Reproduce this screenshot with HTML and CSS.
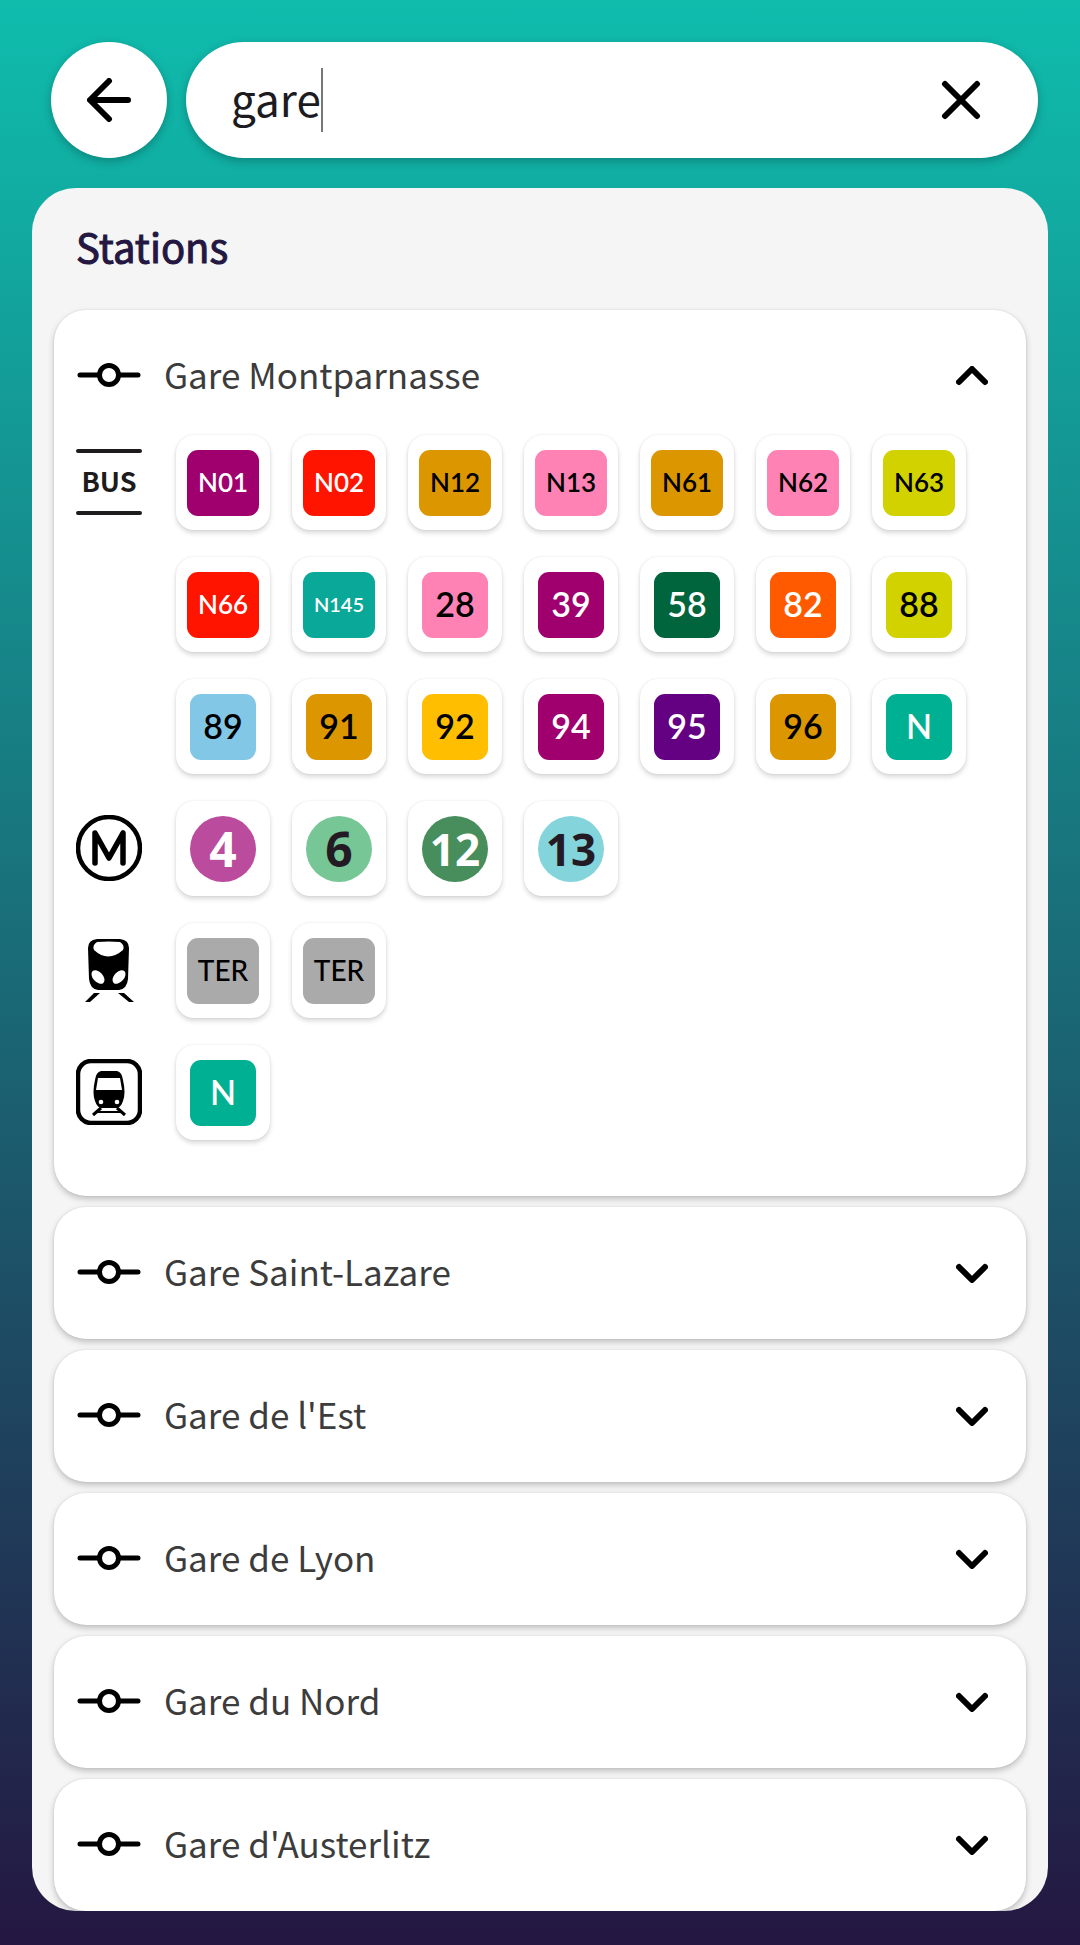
FILE: index.html
```html
<!DOCTYPE html>
<html lang="fr">
<head>
<meta charset="utf-8">
<meta name="viewport" content="width=device-width, initial-scale=1">
<title>Stations</title>
<link rel="stylesheet" href="styles.css">
</head>
<body>
<svg class="sprite" aria-hidden="true">
  <symbol id="stop" viewBox="0 0 66 26">
    <path d="M4 12h19M43 12h19" stroke="#000" stroke-width="5" stroke-linecap="round"/>
    <circle cx="33" cy="12" r="9.500" fill="none" stroke="#000" stroke-width="5"/>
  </symbol>
  <symbol id="chevron" viewBox="0 0 32 20">
    <path d="M3 4l13 13L29 4" fill="none" stroke="#000" stroke-width="6" stroke-linecap="round" stroke-linejoin="round"/>
  </symbol>
</svg>
<div class="app">
  <header class="bar">
    <button class="back" type="button" aria-label="Retour">
      <svg width="44" height="44" viewBox="0 0 44 44"><path d="M41 22H4M22 3L3 22l19 19" fill="none" stroke="#000" stroke-width="6" stroke-linecap="round" stroke-linejoin="round"/></svg>
    </button>
    <div class="search">
      <input class="query" type="text" value="gare" aria-label="Recherche"><span class="caret"></span>
      <button class="clear" type="button" aria-label="Effacer">
        <svg width="40" height="40" viewBox="0 0 40 40"><path d="M4 4l32 32M36 4L4 36" fill="none" stroke="#000" stroke-width="6" stroke-linecap="round"/></svg>
      </button>
    </div>
  </header>
  <main class="panel">
    <h1 class="title">Stations</h1>
    <section class="card">
      <button class="head" type="button" aria-expanded="true">
        <svg class="stop"><use href="#stop"/></svg><span class="name">Gare Montparnasse</span><svg class="chevron up"><use href="#chevron"/></svg>
      </button>
      <div class="modes">
        <div class="mode">
          <svg class="icon" viewBox="0 0 66 66" role="img" aria-label="Bus"><path d="M2 2h62M2 64h62" stroke="#1d1b1c" stroke-width="4" stroke-linecap="round"/><text class="bus" x="33" y="43" text-anchor="middle">BUS</text></svg>
          <div class="lines">
            <span class="tile"><b class="line wide plum">N01</b></span>
            <span class="tile"><b class="line wide red">N02</b></span>
            <span class="tile"><b class="line wide ochre">N12</b></span>
            <span class="tile"><b class="line wide pink">N13</b></span>
            <span class="tile"><b class="line wide ochre">N61</b></span>
            <span class="tile"><b class="line wide pink">N62</b></span>
            <span class="tile"><b class="line wide lime">N63</b></span>
            <span class="tile"><b class="line wide red">N66</b></span>
            <span class="tile"><b class="line wide small teal">N145</b></span>
            <span class="tile"><b class="line pink">28</b></span>
            <span class="tile"><b class="line plum">39</b></span>
            <span class="tile"><b class="line forest">58</b></span>
            <span class="tile"><b class="line orange">82</b></span>
            <span class="tile"><b class="line lime">88</b></span>
            <span class="tile"><b class="line sky">89</b></span>
            <span class="tile"><b class="line ochre">91</b></span>
            <span class="tile"><b class="line yellow">92</b></span>
            <span class="tile"><b class="line plum">94</b></span>
            <span class="tile"><b class="line violet">95</b></span>
            <span class="tile"><b class="line ochre">96</b></span>
            <span class="tile"><b class="line green">N</b></span>
          </div>
        </div>
        <div class="mode">
          <svg class="icon" viewBox="0 0 66 66" role="img" aria-label="Métro"><circle cx="33" cy="33" r="31" fill="none" stroke="#000" stroke-width="4.500"/><path d="M19 48V18l14 25 14-25v30" fill="none" stroke="#000" stroke-width="5.500" stroke-linecap="round" stroke-linejoin="round"/></svg>
          <div class="lines">
            <span class="tile"><b class="line round m4">4</b></span>
            <span class="tile"><b class="line round m6">6</b></span>
            <span class="tile"><b class="line round pair m12">12</b></span>
            <span class="tile"><b class="line round pair m13">13</b></span>
          </div>
        </div>
        <div class="mode">
          <svg class="icon" viewBox="0 0 66 66" role="img" aria-label="Train"><path fill-rule="evenodd" d="M21 2h23q9 1 9 9l-1 31q-1 10-9 11H22q-8-1-9-11L12 11q0-8 9-9zM21 5q-5 3-3 8 14 13 29 0 2-5-3-8-11-1-23 0z"/><ellipse cx="22" cy="40" rx="8" ry="5" transform="rotate(48 22 40)" fill="#fff"/><ellipse cx="43" cy="40" rx="8" ry="5" transform="rotate(-48 43 40)" fill="#fff"/><path d="M18 56h6L14 65H9zM42 56h6l10 9h-5z"/></svg>
          <div class="lines">
            <span class="tile"><b class="line wide ter">TER</b></span>
            <span class="tile"><b class="line wide ter">TER</b></span>
          </div>
        </div>
        <div class="mode">
          <svg class="icon" viewBox="0 0 66 66" role="img" aria-label="Transilien"><rect x="2" y="2" width="62" height="62" rx="13" fill="none" stroke="#000" stroke-width="4.500"/><path fill-rule="evenodd" d="M25 12h16q5 1 6 9 3 13 0 21-2 6-6 7H25q-4-1-6-7-3-8 0-21 1-8 6-9zM22 19l-2 12h26l-2-12z"/><circle cx="25" cy="43" r="2.300" fill="#fff"/><circle cx="41" cy="43" r="2.300" fill="#fff"/><path d="M25 49l-8 7M41 49l8 7" stroke="#000" stroke-width="3"/><path d="M21 53h24" stroke="#000" stroke-width="2"/></svg>
          <div class="lines">
            <span class="tile"><b class="line green">N</b></span>
          </div>
        </div>
      </div>
    </section>
    <section class="card"><button class="head" type="button" aria-expanded="false"><svg class="stop"><use href="#stop"/></svg><span class="name">Gare Saint-Lazare</span><svg class="chevron"><use href="#chevron"/></svg></button></section>
    <section class="card"><button class="head" type="button" aria-expanded="false"><svg class="stop"><use href="#stop"/></svg><span class="name">Gare de l'Est</span><svg class="chevron"><use href="#chevron"/></svg></button></section>
    <section class="card"><button class="head" type="button" aria-expanded="false"><svg class="stop"><use href="#stop"/></svg><span class="name">Gare de Lyon</span><svg class="chevron"><use href="#chevron"/></svg></button></section>
    <section class="card"><button class="head" type="button" aria-expanded="false"><svg class="stop"><use href="#stop"/></svg><span class="name">Gare du Nord</span><svg class="chevron"><use href="#chevron"/></svg></button></section>
    <section class="card"><button class="head" type="button" aria-expanded="false"><svg class="stop"><use href="#stop"/></svg><span class="name">Gare d'Austerlitz</span><svg class="chevron"><use href="#chevron"/></svg></button></section>
  </main>
</div>
</body>
</html>
```
FILE: styles.css
```css
* { box-sizing: border-box; }
body { margin: 0; font-family: "Noto Sans CJK SC", "Noto Sans", sans-serif; }
button, input { border: 0; padding: 0; margin: 0; background: none; font: inherit; color: inherit; }
svg { display: block; flex: none; }
.sprite { position: absolute; width: 0; height: 0; }

.app {
  display: flex; flex-direction: column; gap: 30px;
  min-height: 100vh; padding: 42px 32px 34px;
  background: linear-gradient(#0fbdad, #241741);
}
.bar { display: flex; gap: 19px; padding: 0 10px 0 19px; }
.back {
  display: grid; place-items: center; flex: none;
  width: 116px; height: 116px; border-radius: 50%;
  background: #fff; box-shadow: 0 3px 10px rgba(0, 0, 0, .25);
}
.search {
  display: flex; align-items: center; flex: 1; min-width: 0; height: 116px;
  padding: 0 57px 0 45px; border-radius: 58px;
  background: #fff; box-shadow: 0 3px 10px rgba(0, 0, 0, .25);
}
.query { field-sizing: content; max-width: 80%; padding-bottom: 4px; font-size: 44px; line-height: 64px; color: #1c1b1f; outline: 0; }
.caret { width: 2px; height: 64px; background: #777; }
.clear { margin-left: auto; }

.panel {
  flex: 1; padding: 30px 22px 0; overflow: hidden;
  display: flex; flex-direction: column; gap: 11px;
  border-radius: 44px; background: #f5f5f5;
}
.title { margin: 0 0 25px 22px; font-size: 40px; line-height: 56px; font-weight: 400; -webkit-text-stroke: 1px; color: #241741; }
.card { border-radius: 32px; background: #fff; box-shadow: 0 3px 6px rgba(0, 0, 0, .22), 0 0 2px rgba(0, 0, 0, .1); }
.head { display: flex; align-items: center; width: 100%; height: 132px; padding: 0 38px 0 22px; text-align: left; }
.stop { width: 66px; height: 26px; }
.name { flex: 1; margin-left: 22px; padding-bottom: 4px; font-size: 35px; line-height: 50px; color: #3c3c3c; }
.chevron { width: 32px; height: 20px; }
.up { transform: rotate(180deg); }

.modes { display: flex; flex-direction: column; gap: 27px; padding: 0 22px 56px; margin-top: -7px; }
.mode { display: flex; gap: 34px; }
.icon { width: 66px; height: 66px; margin-top: 14px; }
.bus { font: 700 27px "Noto Sans CJK SC", sans-serif; fill: #1d1b1c; }
.lines { display: flex; flex-wrap: wrap; gap: 27px 22px; flex: 1; }
.tile {
  display: grid; place-items: center; width: 94px; height: 95px;
  border-radius: 18px; background: #fff;
  box-shadow: 0 3px 5px rgba(0, 0, 0, .15), 0 0 2px rgba(0, 0, 0, .1);
}
.line {
  display: grid; place-items: center; width: 66px; height: 66px; padding-bottom: 2px; border-radius: 11px;
  font: 600 34px/40px Lato, sans-serif; color: #fff;
}
.wide { width: 72px; font-size: 26px; }
.small { font-size: 20px; }
.round { border-radius: 50%; padding: 0; font: 700 48px/66px "Open Sans", sans-serif; }
.pair { font-size: 44px; }
.plum { background: #a0006e; }
.red { background: #ff1400; }
.ochre { background: #dc9600; color: #000; }
.pink { background: #ff82b4; color: #000; }
.lime { background: #d2d200; color: #000; }
.teal { background: #0aa898; }
.forest { background: #00643c; }
.orange { background: #ff5a00; }
.sky { background: #82c8e6; color: #000; }
.yellow { background: #ffbe00; color: #000; }
.violet { background: #640082; }
.green { background: #00b092; }
.ter { background: #aaa; color: #000; font-size: 28px; font-weight: 500; }
.m4 { background: #bb4b9c; }
.m6 { background: #77c696; color: #231a24; }
.m12 { background: #478e5c; }
.m13 { background: #84d4db; color: #231a24; }
```
